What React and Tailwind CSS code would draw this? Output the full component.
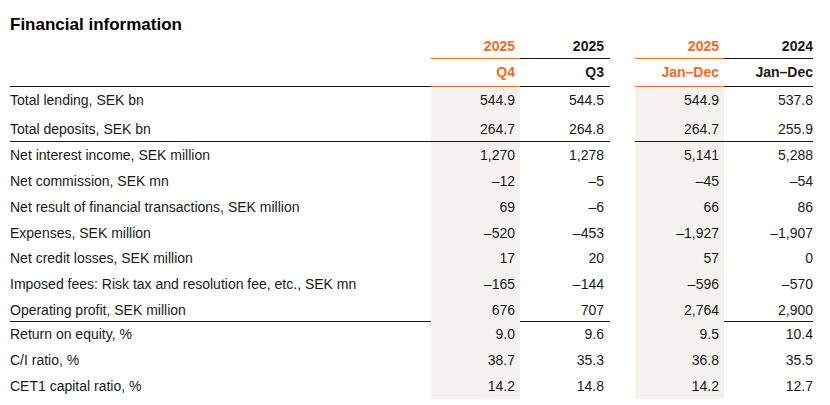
const ORANGE = "text-[#f26a21]";

const rows = [
  { label: "Total lending, SEK bn", v: ["544.9", "544.5", "544.9", "537.8"], h: "h-[27px]" },
  { label: "Total deposits, SEK bn", v: ["264.7", "264.8", "264.7", "255.9"], h: "h-[28px]", line: true },
  { label: "Net interest income, SEK million", v: ["1,270", "1,278", "5,141", "5,288"] },
  { label: "Net commission, SEK mn", v: ["–12", "–5", "–45", "–54"] },
  { label: "Net result of financial transactions, SEK million", v: ["69", "–6", "66", "86"] },
  { label: "Expenses, SEK million", v: ["–520", "–453", "–1,927", "–1,907"] },
  { label: "Net credit losses, SEK million", v: ["17", "20", "57", "0"], h: "h-[25px]" },
  { label: "Imposed fees: Risk tax and resolution fee, etc., SEK mn", v: ["–165", "–144", "–596", "–570"] },
  { label: "Operating profit, SEK million", v: ["676", "707", "2,764", "2,900"], h: "h-[24px]", line: true },
  { label: "Return on equity, %", v: ["9.0", "9.6", "9.5", "10.4"] },
  { label: "C/I ratio, %", v: ["38.7", "35.3", "36.8", "35.5"] },
  { label: "CET1 capital ratio, %", v: ["14.2", "14.8", "14.2", "12.7"] },
];

const grid = "grid grid-cols-[421px_89px_90px_25px_89px_89px]";

function Row({ r }) {
  const b = r.line ? "border-b border-[#1a1a1a] pt-[3px]" : "";
  const h = r.h || "h-[26px]";
  return (
    <div className={`${grid} ${h}`}>
      <div className={`flex items-center ${b}`}>{r.label}</div>
      <div className={`flex items-center justify-end pr-[5px] bg-[#f4f3f0] ${b}`}>{r.v[0]}</div>
      <div className={`flex items-center justify-end pr-[6px] ${b}`}>{r.v[1]}</div>
      <div />
      <div className={`flex items-center justify-end pr-[5px] bg-[#f4f3f0] ${b}`}>{r.v[2]}</div>
      <div className={`flex items-center justify-end ${b}`}>{r.v[3]}</div>
    </div>
  );
}

export default function App() {
  return (
    <div className="w-[830px] h-[405px] bg-white pl-[10px] pt-[15px] text-[14px] text-[#1a1a1a] font-['Liberation_Sans',Arial,sans-serif] overflow-hidden">
      <h1 className="text-[17px] font-bold leading-[20px] text-black">Financial information</h1>

      {/* header */}
      <div className={`${grid} h-[24px] font-bold`}>
        <div />
        <div className={`flex items-center justify-end pr-[5px] border-b border-[#f26a21] ${ORANGE}`}>2025</div>
        <div className="flex items-center justify-end pr-[6px] border-b border-[#1a1a1a]">2025</div>
        <div />
        <div className={`flex items-center justify-end pr-[5px] border-b border-[#f26a21] ${ORANGE}`}>2025</div>
        <div className="flex items-center justify-end border-b border-[#1a1a1a]">2024</div>
      </div>
      <div className={`${grid} h-[28px] font-bold`}>
        <div className="border-b border-[#1a1a1a]" />
        <div className={`flex items-center justify-end pr-[5px] border-b border-[#f26a21] ${ORANGE}`}>Q4</div>
        <div className="flex items-center justify-end pr-[6px] border-b border-[#1a1a1a]">Q3</div>
        <div />
        <div className={`flex items-center justify-end pr-[5px] border-b border-[#f26a21] ${ORANGE}`}>Jan–Dec</div>
        <div className="flex items-center justify-end border-b border-[#1a1a1a]">Jan–Dec</div>
      </div>

      {rows.map((r) => (
        <Row key={r.label} r={r} />
      ))}
    </div>
  );
}
